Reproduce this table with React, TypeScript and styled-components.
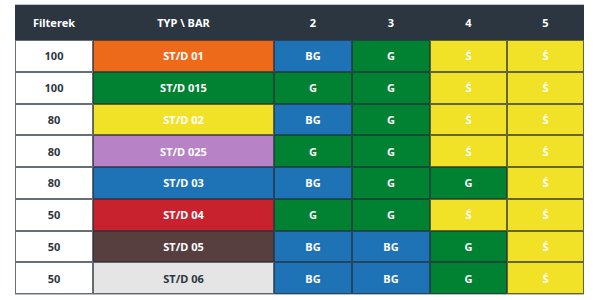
import React from "react";
import styled, { createGlobalStyle } from "styled-components";

const GlobalStyle = createGlobalStyle`
  body {
    margin: 0;
    background: #ffffff;
    font-family: "Noto Sans", "Open Sans", sans-serif;
  }
`;

const palette: Record<string, string> = {
  orange: "#ee6a1b",
  green: "#008232",
  yellow: "#f2e227",
  purple: "#b882c6",
  blue: "#1e73b6",
  red: "#c8222f",
  brown: "#573f3f",
  grey: "#e4e5e4",
};

const barColor: Record<string, string> = {
  BG: palette.blue,
  G: palette.green,
  "Ś": palette.yellow,
};

interface Row {
  filter: number;
  typ: string;
  color: string;
  bars: string[];
}

const rows: Row[] = [
  { filter: 100, typ: "ST/D 01", color: "orange", bars: ["BG", "G", "Ś", "Ś"] },
  { filter: 100, typ: "ST/D 015", color: "green", bars: ["G", "G", "Ś", "Ś"] },
  { filter: 80, typ: "ST/D 02", color: "yellow", bars: ["BG", "G", "Ś", "Ś"] },
  { filter: 80, typ: "ST/D 025", color: "purple", bars: ["G", "G", "Ś", "Ś"] },
  { filter: 80, typ: "ST/D 03", color: "blue", bars: ["BG", "G", "G", "Ś"] },
  { filter: 50, typ: "ST/D 04", color: "red", bars: ["G", "G", "Ś", "Ś"] },
  { filter: 50, typ: "ST/D 05", color: "brown", bars: ["BG", "BG", "G", "Ś"] },
  { filter: 50, typ: "ST/D 06", color: "grey", bars: ["BG", "BG", "G", "Ś"] },
];

const headers = ["Filterek", "TYP \\ BAR", "2", "3", "4", "5"];

const App: React.FC = () => {
  return (
    <>
      <GlobalStyle />
      <Wrapper>
        <Grid>
          {headers.map((h) => (
            <HeadCell key={h}>{h}</HeadCell>
          ))}
          {rows.map((row) => (
            <React.Fragment key={row.typ}>
              <Cell bg="#ffffff" dark>
                {row.filter}
              </Cell>
              <Cell bg={palette[row.color]} dark={row.color === "grey"}>
                {row.typ}
              </Cell>
              {row.bars.map((b, i) => (
                <Cell key={i} bg={barColor[b]}>
                  {b}
                </Cell>
              ))}
            </React.Fragment>
          ))}
        </Grid>
      </Wrapper>
    </>
  );
};

export default App;

const Wrapper = styled.div`
  margin: 4px 0 0 15px;
  width: 569px;
  border-top: 1px solid #c3c7cb;
`;

const Grid = styled.div`
  display: grid;
  grid-template-columns: 78px 181px 78px 78px 77px 77px;
  grid-template-rows: 35px;
  grid-auto-rows: 31.75px;
  border-bottom: 1px solid #b8bdc2;
`;

const HeadCell = styled.div`
  background: #2b3641;
  color: #ffffff;
  font-size: 11px;
  font-weight: 700;
  display: flex;
  align-items: center;
  justify-content: center;
`;

const Cell = styled.div<{ bg: string; dark?: boolean }>`
  box-sizing: border-box;
  background: ${(p) => p.bg};
  color: ${(p) => (p.dark ? "#2b3641" : "#ffffff")};
  border: 1px solid rgba(38, 48, 58, 0.7);
  font-size: 11px;
  font-weight: 700;
  display: flex;
  align-items: center;
  justify-content: center;
`;
